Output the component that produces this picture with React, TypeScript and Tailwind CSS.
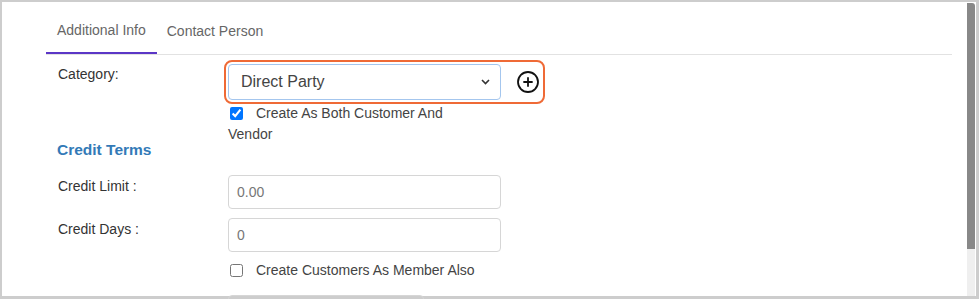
import { CirclePlus } from "lucide-react";

const font = "font-['Liberation_Sans',Arial,sans-serif]";

function FieldRow({ label, value, mt }: { label: string; value: string; mt: string }) {
  return (
    <div className={`flex items-start ${mt}`}>
      <div className="ml-[12px] w-[170px] pt-[1px] text-[14px] leading-[20px] text-[#333]">{label}</div>
      <div className="flex h-[34px] w-[273px] items-center rounded-[4px] border border-[#d6d6d6] pl-[8px] text-[14px] text-[#777]">
        {value}
      </div>
    </div>
  );
}

export default function App() {
  return (
    <div className={`h-[299px] w-[979px] overflow-hidden bg-[#cdcdcd] pb-[3px] pl-[2px] pr-[3px] pt-[2px] ${font}`}>
      <div className="flex h-full bg-white">
        {/* page content */}
        <div className="flex-1">
          <div className="ml-[44px] w-[906px]">
            {/* tabs */}
            <div className="flex border-b border-[#e2e2e2]">
              <div className="flex h-[52px] items-center border-b-2 border-[#5b36c6] px-[11px] pt-[6px] text-[14px] text-[#666]">
                Additional Info
              </div>
              <div className="flex h-[52px] items-center px-[10px] pt-[6px] text-[14px] text-[#666]">Contact Person</div>
            </div>

            {/* category */}
            <div className="mt-[9px] flex items-start">
              <div className="ml-[12px] w-[170px] text-[14px] leading-[20px] text-[#333]">Category:</div>
              <div>
                <div className="relative flex items-center">
                  <div className="flex h-[36px] w-[273px] items-center justify-between rounded-[4px] border border-[#a4c6ee] pl-[12px] pr-[10px] text-[16px] text-[#444]">
                    <span>Direct Party</span>
                    <svg width="9" height="6" viewBox="0 0 9 6" fill="none">
                      <path d="M1 1l3.5 3.5L8 1" stroke="#333" strokeWidth="1.6" />
                    </svg>
                  </div>
                  <CirclePlus className="ml-[15px]" size={24} strokeWidth={1.8} color="#111" />
                  <div className="pointer-events-none absolute -left-[4px] -top-[4px] h-[44px] w-[321px] rounded-[8px] border-2 border-[#ef6a36]" />
                </div>
                <div className="mt-[3px] w-[240px] text-[14px] leading-[21px] text-[#444]">
                  <input type="checkbox" defaultChecked className="m-0 ml-[2px] mr-[13px] h-[13px] w-[13px] align-[-2px]" />
                  Create As Both Customer And Vendor
                </div>
              </div>
            </div>

            <div className="ml-[11px] mt-[-3px] text-[15.5px] font-bold leading-[16px] text-[#337ab7]">Credit Terms</div>

            <FieldRow label="Credit Limit :" value="0.00" mt="mt-[17px]" />
            <FieldRow label="Credit Days :" value="0" mt="mt-[9px]" />

            <div className="mt-[8px] flex">
              <div className="ml-[12px] w-[170px]" />
              <div className="text-[14px] leading-[21px] text-[#444]">
                <input type="checkbox" className="m-0 ml-[2px] mr-[13px] h-[13px] w-[13px] align-[-2px]" />
                Create Customers As Member Also
              </div>
            </div>

            <div className="mt-[14px] flex">
              <div className="ml-[12px] w-[170px]" />
              <div className="h-[34px] w-[196px] rounded-[4px] border border-[#d6d6d6]" />
            </div>
          </div>
        </div>

        {/* scrollbar */}
        <div className="flex w-[8px] flex-col pt-[1px]">
          <div className="h-[246px] rounded-tr-[3px] bg-[#888]" />
          <div className="flex-1 bg-[#efefef]" />
        </div>
        <div className="w-[1px]" />
      </div>
    </div>
  );
}
